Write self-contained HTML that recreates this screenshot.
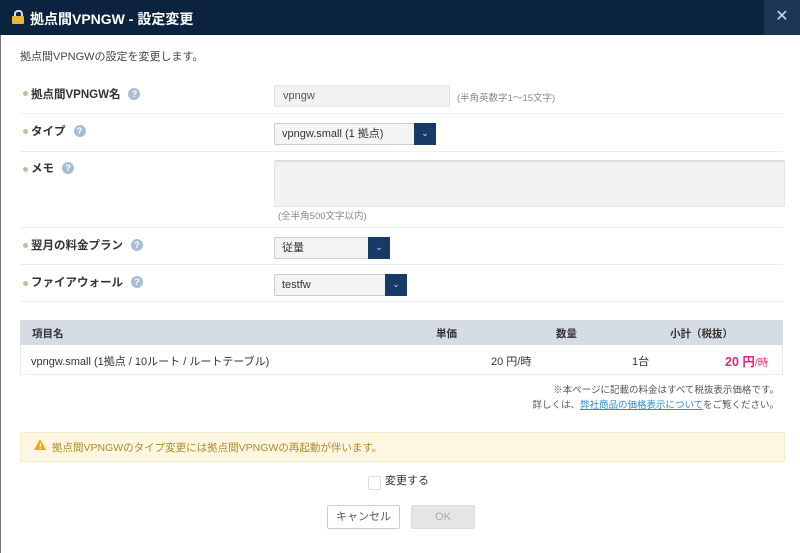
<!DOCTYPE html>
<html><head><meta charset="utf-8"><style>
*{box-sizing:border-box;margin:0;padding:0}
body{width:800px;height:553px;overflow:hidden;background:#fff;font-family:"Liberation Sans","Noto Sans CJK JP",sans-serif;font-size:11px;color:#333;position:relative}
.a{position:absolute;white-space:nowrap}
.hd{left:0;top:0;width:800px;height:35px;background:#0c2340}
.x{left:764px;top:0;width:36px;height:35px;background:#1b3657;color:#cfd8e3;font-size:16px;text-align:center;line-height:34px}
.lb{font-weight:bold;font-size:11.5px;color:#333}
.dot{width:5px;height:5px;border-radius:50%;background:#c9bd8f}
.q{display:inline-block;vertical-align:1px;margin-left:8px;width:12px;height:12px;border-radius:50%;background:#a9bdd6;color:#fff;font-size:9px;font-weight:bold;text-align:center;line-height:12px}
.ln{left:20px;width:763px;height:1px;background:#e8eef4}
.in{background:#f2f2f2;border:1px solid #e3e3e3;border-radius:2px;padding-left:8px;font-size:11px;color:#555}
.sel{background:#f4f4f4;border:1px solid #ccc;border-radius:2px;padding-left:7px;font-size:11px;color:#333}
.btn{position:absolute;right:-1px;top:-1px;bottom:-1px;width:22px;background:#173a66;color:#cfe0f5;font-size:9px;text-align:center}
</style></head><body>
<div class="a hd"></div>
<div class="a" style="left:11px;top:10px;width:14px;height:12px;">
<div style="position:absolute;left:3px;top:0;width:9px;height:8px;border:2px solid #ddd;border-bottom:none;border-radius:4px 4px 0 0"></div>
<div style="position:absolute;left:1px;top:6px;width:12px;height:8px;background:#e8b83a;border-radius:1px"></div></div>
<div class="a" style="left:30px;top:9px;color:#fff;font-weight:bold;font-size:14px">拠点間VPNGW - 設定変更</div>
<div class="a x">✕</div>
<div class="a" style="left:0;top:35px;width:1px;height:518px;background:#777"></div>
<div class="a" style="left:20px;top:48px;font-size:11px;color:#444">拠点間VPNGWの設定を変更します。</div>

<div class="a dot" style="left:23px;top:91px"></div><div class="a lb" style="left:31px;top:86px">拠点間VPNGW名<span class="q">?</span></div>
<div class="a in" style="left:274px;top:85px;width:176px;height:22px;line-height:20px">vpngw</div>
<div class="a" style="left:457px;top:90px;font-size:9.5px;color:#888">(半角英数字1〜15文字)</div>
<div class="a ln" style="top:113px"></div>

<div class="a dot" style="left:23px;top:129px"></div><div class="a lb" style="left:31px;top:123px">タイプ<span class="q">?</span></div>
<div class="a sel" style="left:274px;top:123px;width:162px;height:22px;line-height:20px">vpngw.small (1 拠点)<div class="btn" style="line-height:20px">⌄</div></div>
<div class="a ln" style="top:151px"></div>

<div class="a dot" style="left:23px;top:167px"></div><div class="a lb" style="left:31px;top:160px">メモ<span class="q">?</span></div>
<div class="a in" style="left:274px;top:160px;width:511px;height:47px;border-top:2px solid #ddd"></div>
<div class="a" style="left:278px;top:208px;font-size:9.5px;color:#888">(全半角500文字以内)</div>
<div class="a ln" style="top:227px"></div>

<div class="a dot" style="left:23px;top:243px"></div><div class="a lb" style="left:31px;top:237px">翌月の料金プラン<span class="q">?</span></div>
<div class="a sel" style="left:274px;top:237px;width:116px;height:22px;line-height:20px">従量<div class="btn" style="line-height:20px">⌄</div></div>
<div class="a ln" style="top:264px"></div>

<div class="a dot" style="left:23px;top:281px"></div><div class="a lb" style="left:31px;top:274px">ファイアウォール<span class="q">?</span></div>
<div class="a sel" style="left:274px;top:274px;width:133px;height:22px;line-height:20px">testfw<div class="btn" style="line-height:20px">⌄</div></div>
<div class="a ln" style="top:301px"></div>

<div class="a" style="left:20px;top:320px;width:763px;height:25px;background:#d6dce4"></div>
<div class="a lb" style="left:32px;top:326px;font-size:10.5px">項目名</div>
<div class="a lb" style="left:436px;top:326px;font-size:10.5px">単価</div>
<div class="a lb" style="left:556px;top:326px;font-size:10.5px">数量</div>
<div class="a lb" style="left:670px;top:326px;font-size:10.5px">小計（税抜）</div>
<div class="a" style="left:20px;top:345px;width:763px;height:30px;border:1px solid #e6ecf2;border-top:none"></div>
<div class="a" style="left:31px;top:353px;font-size:11px">vpngw.small (1拠点 / 10ルート / ルートテーブル)</div>
<div class="a" style="left:491px;top:353px;font-size:11px">20 円/時</div>
<div class="a" style="left:632px;top:353px;font-size:11px">1台</div>
<div class="a" style="left:725px;top:351px;color:#e0287a;font-weight:bold;font-size:12.5px">20 円<span style="font-weight:normal;font-size:10.5px">/時</span></div>
<div class="a" style="right:21px;top:382px;font-size:9.5px;color:#555">※本ページに記載の料金はすべて税抜表示価格です。</div>
<div class="a" style="right:21px;top:397px;font-size:9.5px;color:#555">詳しくは、<span style="color:#2a8fc7;text-decoration:underline">弊社商品の価格表示について</span>をご覧ください。</div>

<div class="a" style="left:20px;top:432px;width:765px;height:30px;background:#fdf6e1;border:1px solid #f3ead0"></div>
<div class="a" style="left:34px;top:439px;width:0;height:0;border-left:6px solid transparent;border-right:6px solid transparent;border-bottom:11px solid #f2a900"></div>
<div class="a" style="left:39px;top:442px;color:#fff;font-size:8px;font-weight:bold">!</div>
<div class="a" style="left:52px;top:440px;font-size:10.5px;color:#b08a2a">拠点間VPNGWのタイプ変更には拠点間VPNGWの再起動が伴います。</div>

<div class="a" style="left:368px;top:476px;width:13px;height:14px;border:1px solid #ddd;border-radius:2px"></div>
<div class="a" style="left:385px;top:472px;font-size:11px;color:#333">変更する</div>
<div class="a" style="left:327px;top:505px;width:73px;height:24px;border:1px solid #ccc;border-radius:2px;text-align:center;line-height:22px;color:#555">キャンセル</div>
<div class="a" style="left:411px;top:505px;width:64px;height:24px;background:#e5e5e5;border:1px solid #ddd;border-radius:2px;text-align:center;line-height:22px;color:#aaa">OK</div>
</body></html>
